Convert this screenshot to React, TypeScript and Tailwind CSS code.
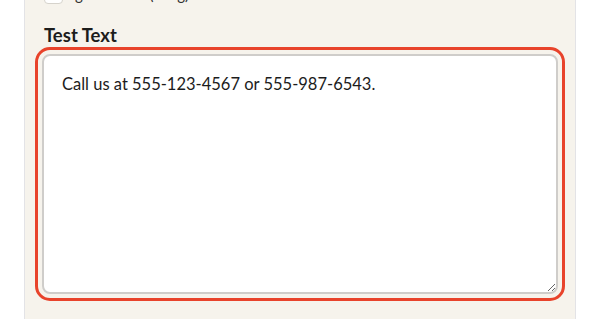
export default function App() {
  return (
    <div className="h-[319px] bg-white font-['Lato',sans-serif] text-[#1c1c1c] overflow-hidden">
      <div className="mx-[24px] h-[340px] border-x border-[#e3e3e6] bg-[#f6f3ec] px-[17px]">
        <div className="-mt-[16px] flex h-[20px] items-center gap-[8px] pl-[2px]">
          <span className="h-[19px] w-[19px] rounded-[4px] border border-[#d6d3cc] bg-white" />
          <span className="text-[15px] text-[#333]">Ignore case (i flag)</span>
        </div>
        <label className="mt-[20px] block pl-[2px] text-[18.5px] font-bold leading-[22px]">Test Text</label>
        <textarea
          defaultValue="Call us at 555-123-4567 or 555-987-6543."
          className="mt-[8px] block h-[240px] w-full resize-y rounded-[8px] border-2 border-[#cfcdca] bg-white px-[18px] pt-[16px] pb-[14px] text-[16.5px] leading-[24px] text-[#1c1c1c] outline-3 outline-offset-4 outline-solid outline-[#e8432b]"
        />
      </div>
    </div>
  )
}
